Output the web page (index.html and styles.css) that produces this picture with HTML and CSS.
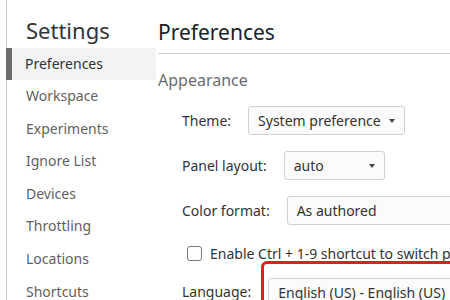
FILE: index.html
```html
<!DOCTYPE html>
<html lang="en">
<head>
    <meta charset="UTF-8">
    <title>Settings</title>
    <link rel="stylesheet" href="styles.css">
</head>
<body>
    <div class="settings">
        <!-- Sidebar -->
        <div class="sidebar">
            <div class="sidebar-title">Settings</div>
            <div class="nav-item selected">Preferences</div>
            <div class="nav-item">Workspace</div>
            <div class="nav-item">Experiments</div>
            <div class="nav-item">Ignore List</div>
            <div class="nav-item">Devices</div>
            <div class="nav-item">Throttling</div>
            <div class="nav-item">Locations</div>
            <div class="nav-item">Shortcuts</div>
        </div>

        <!-- Main panel -->
        <div class="main">
            <div class="main-title">Preferences</div>
            <div class="section-title">Appearance</div>

            <div class="row theme-row">
                <span class="label">Theme:</span>
                <div class="select">System preference <span class="arrow"></span></div>
            </div>
            <div class="row layout-row">
                <span class="label">Panel layout:</span>
                <div class="select layout-select">auto <span class="arrow"></span></div>
            </div>
            <div class="row format-row">
                <span class="label">Color format:</span>
                <div class="select wide">As authored</div>
            </div>
            <div class="check-row">
                <span class="checkbox"></span>
                <span class="check-label">Enable Ctrl + 1-9 shortcut to switch panels</span>
            </div>
            <div class="row lang-row">
                <span class="label">Language:</span>
                <div class="highlight">
                    <div class="select wide">English (US) - English (US)</div>
                </div>
            </div>
        </div>
    </div>
</body>
</html>
```

FILE: styles.css
```css
body {
    margin: 0;
    font-family: 'Noto Sans', 'Open Sans', sans-serif;
    background-color: #fff;
    color: #333;
    overflow: hidden;
}

.settings {
    display: flex;
    height: 300px;
    overflow: hidden;
}

/* Sidebar */
.sidebar {
    width: 149px;
    margin-left: 6px;
    border-left: 1px solid #c8c8c8;
    flex-shrink: 0;
}

.sidebar-title {
    height: 48px;
    padding-left: 19px;
    font-size: 22px;
    line-height: 60px;
    color: #333;
}

.nav-item {
    height: 32.6px;
    line-height: 32px;
    padding-left: 19px;
    font-size: 14px;
    color: #5f5f5f;
}

.nav-item.selected {
    height: 32px;
    background-color: #f1f3f4;
    border-left: 6px solid #6e6e6e;
    padding-left: 13px;
    margin-left: -1px;
    color: #333;
}

/* Main panel */
.main {
    flex: 1;
    min-width: 0;
    padding-left: 2px;
}

.main-title {
    height: 53px;
    line-height: 64px;
    font-size: 21px;
    color: #202124;
    border-bottom: 1px solid #cfcfcf;
}

.section-title {
    font-size: 16px;
    color: #6b6b6b;
    margin-top: 14px;
    height: 24px;
    line-height: 24px;
}

.row {
    display: flex;
    align-items: center;
    padding-left: 24px;
    height: 29px;
}

.theme-row {
    margin-top: 14px;
}

.layout-row,
.format-row {
    margin-top: 16px;
}

.label {
    font-size: 14px;
    color: #333;
    margin-right: 17px;
    white-space: nowrap;
    flex-shrink: 0;
}

.select {
    display: flex;
    align-items: center;
    flex-shrink: 0;
    height: 27px;
    padding: 0 9px;
    border: 1px solid #d0d0d0;
    border-radius: 3px;
    background-color: #fbfbfb;
    font-size: 14px;
    color: #333;
    white-space: nowrap;
}

.layout-select {
    width: 81px;
    justify-content: space-between;
}

.arrow {
    margin-left: 8px;
    border-left: 3.5px solid transparent;
    border-right: 3.5px solid transparent;
    border-top: 4px solid #444;
}

.wide {
    width: 300px;
}

/* Checkbox row */
.check-row {
    display: flex;
    align-items: center;
    padding-left: 29px;
    margin-top: 20px;
    height: 16px;
}

.checkbox {
    width: 13px;
    height: 13px;
    border: 1px solid #767676;
    border-radius: 3px;
    margin-right: 8px;
    flex-shrink: 0;
}

.check-label {
    font-size: 14px;
    color: #333;
    white-space: nowrap;
}

/* Language row with red highlight */
.lang-row {
    margin-top: 0;
    height: 60px;
    align-items: flex-start;
}

.lang-row .label {
    margin-top: 21px;
    margin-right: 10px;
}

.highlight {
    border: 3px solid #f01818;
    border-radius: 6px;
    padding: 14px 0 0 4px;
    height: 60px;
}
```
